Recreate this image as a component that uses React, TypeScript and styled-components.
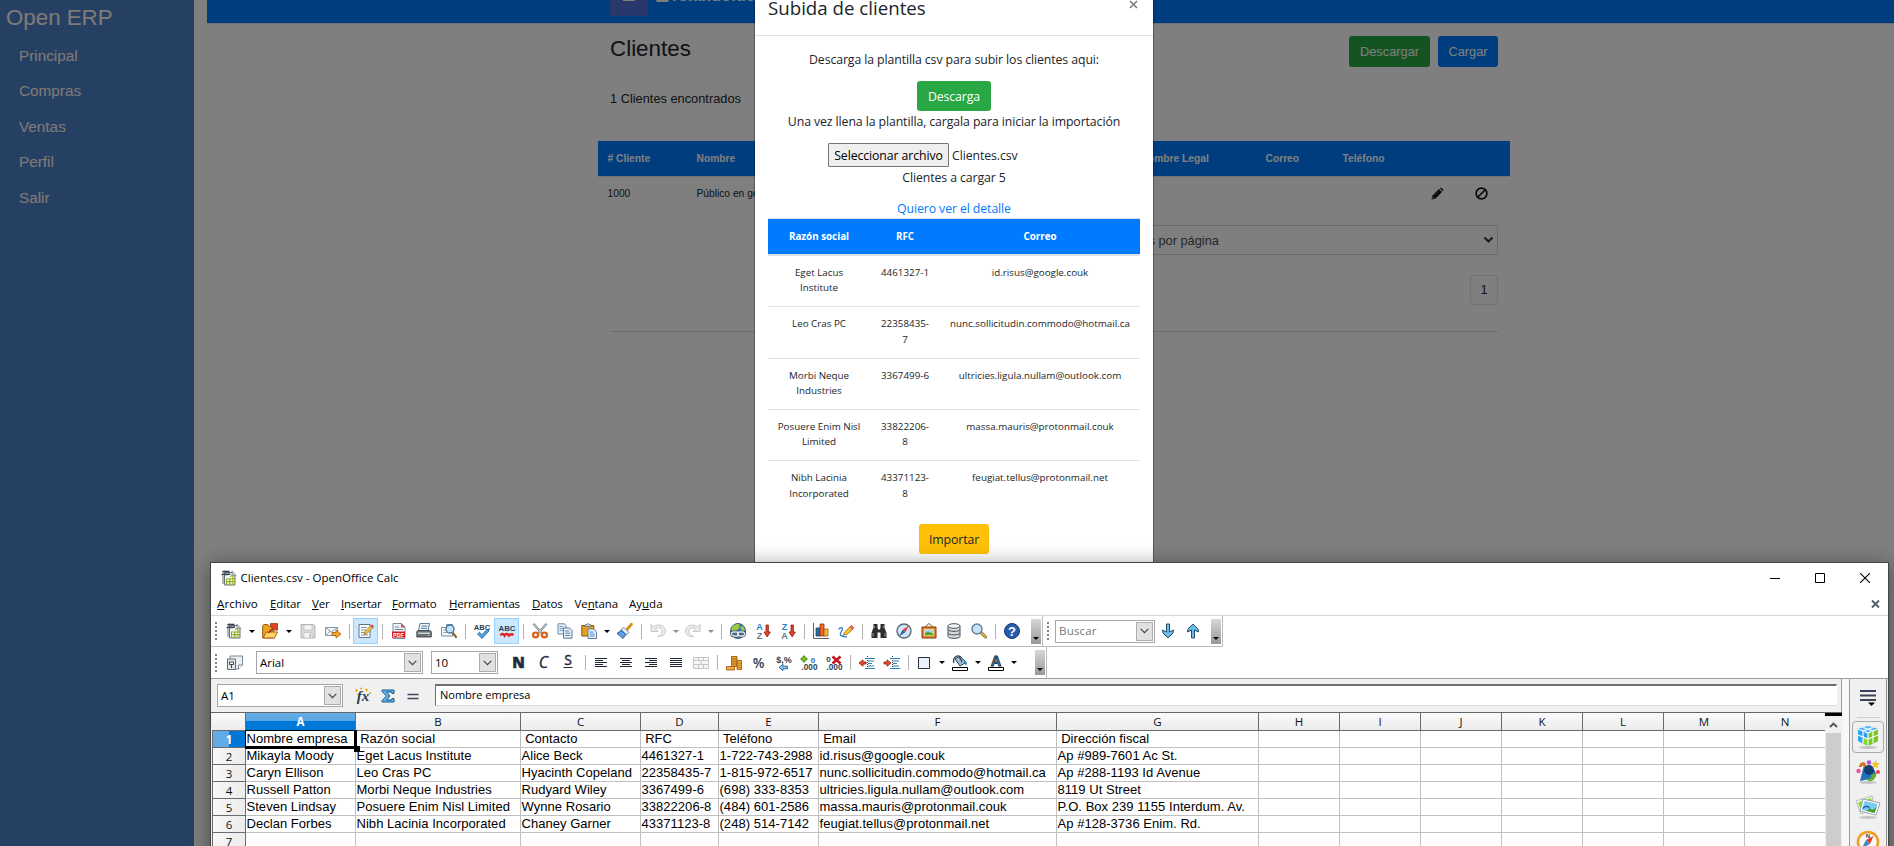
import React from 'react';
import styled, { createGlobalStyle, css } from 'styled-components';

const ui = '"Segoe UI", "Open Sans", sans-serif';
const arial = '"Liberation Sans", Arial, sans-serif';

const GlobalStyle = createGlobalStyle`
  * { box-sizing: border-box; }
  body { margin: 0; background: #808080; overflow: hidden; }
  svg { display: block; flex: none; }
`;

const Screen = styled.div`
  position: relative;
  width: 1894px;
  height: 846px;
  overflow: hidden;
`;

/* ---------- ERP page ---------- */

const Page = styled.div`
  display: flex;
  height: 100%;
  background: #fff;
  font-family: ${arial};
  font-size: 12.8px;
  color: #212529;
`;

const Sidebar = styled.nav`
  width: 194px;
  background: #4c80c8;
  color: #fff5ec;
  padding: 4px 0 0 6px;
`;

const Brand = styled.div`
  font-size: 22.3px;
  line-height: 27px;
`;

const NavItem = styled.a`
  display: block;
  height: 35.4px;
  line-height: 35.4px;
  padding-left: 13px;
  font-size: 15.3px;
`;

const NavList = styled.div`
  padding-top: 7px;
`;

const Main = styled.main`
  flex: 1;
  margin-left: 13px;
`;

const TopBar = styled.header`
  height: 24px;
  background: #007bff;
  border-bottom: 1px solid #dee2e6;
  padding-left: 403px;
  display: flex;
  align-items: flex-start;
`;

const MenuToggle = styled.div`
  width: 38px;
  height: 16px;
  background: #5070d8;
  display: flex;
  justify-content: center;
  margin-right: 8px;
  &::after {
    content: '';
    width: 12px;
    height: 1px;
    background: #fff;
  }
`;

const UserName = styled.div`
  font-weight: 700;
  font-size: 16px;
  line-height: 18px;
  margin: -13px 0 0 3px;
  color: #fff;
`;

const UserIcon = styled.div`
  width: 13px;
  height: 2px;
  background: #fff;
  border-radius: 0 0 5px 5px;
`;

const Container = styled.div`
  width: 912px;
  margin-left: 391px;
`;

const Heading = styled.div`
  display: flex;
  justify-content: space-between;
  padding: 12px 12px 0;
`;

const Title = styled.h1`
  margin: 0;
  font-size: 22.4px;
  font-weight: 400;
  line-height: 26px;
`;

const Actions = styled.div`
  display: flex;
  gap: 8px;
`;

const Button = styled.button<{ $tone: 'green' | 'blue' | 'yellow'; $w: number; $h?: number }>`
  width: ${(p) => p.$w}px;
  height: ${(p) => p.$h ?? 30}px;
  padding: 0;
  border: 0;
  border-radius: 3px;
  font: inherit;
  letter-spacing: inherit;
  color: ${(p) => (p.$tone === 'yellow' ? '#212529' : '#fff')};
  background: ${(p) => ({ green: '#28a745', blue: '#007bff', yellow: '#ffc107' })[p.$tone]};
`;

const Found = styled.div`
  padding: 24px 12px 0;
  line-height: 15px;
`;

const ClientHead = styled.div`
  margin-top: 35px;
  display: grid;
  grid-template-columns: 89px 444px 125px 77px 1fr;
  align-items: center;
  height: 36px;
  padding-left: 9.5px;
  border-bottom: 1px solid #dee2e6;
  background: #007bff;
  color: #fff;
  font-size: 10.24px;
  font-weight: 700;
`;

const ClientRow = styled.div`
  display: grid;
  grid-template-columns: 89px 734px 44px 1fr;
  align-items: center;
  height: 33px;
  padding-left: 9.5px;
  font-size: 10.24px;
`;

const PageSize = styled.div`
  display: flex;
  align-items: center;
  justify-content: space-between;
  width: 500px;
  height: 30px;
  margin: 15px 12px 0 auto;
  padding: 0 3px 0 89px;
  border: 1px solid #ced4da;
  border-radius: 3px;
  color: #495057;
`;

const PageNumber = styled.div`
  width: 28px;
  height: 30px;
  margin: 20px 12px 26px auto;
  border: 1px solid #dee2e6;
  border-radius: 3px;
  line-height: 27px;
  text-align: center;
`;

const Rule = styled.hr`
  margin: 0 12px;
  border: 0;
  border-top: 1px solid #dcdcdc;
`;

const Backdrop = styled.div`
  position: absolute;
  inset: 0;
  background: rgba(0, 0, 0, 0.5);
`;

/* ---------- Upload dialog ---------- */

const Modal = styled.section`
  position: absolute;
  left: 754px;
  top: -30px;
  width: 400px;
  height: 640px;
  border: 1px solid rgba(0, 0, 0, 0.3);
  background: #fff;
  background-clip: padding-box;
  font: 12.3px/19px ${ui};
  letter-spacing: -0.1px;
  color: #212529;
`;

const ModalHeader = styled.div`
  display: flex;
  align-items: flex-end;
  justify-content: space-between;
  height: 65px;
  padding: 0 13px 13px;
  border-bottom: 1px solid #dee2e6;
`;

const ModalTitle = styled.h2`
  margin: 0;
  font-size: 18.7px;
  font-weight: 500;
  line-height: 28px;
  letter-spacing: 0;
`;

const CloseMark = styled.span`
  padding: 0 2px 13px 0;
`;

const ModalBody = styled.div`
  display: flex;
  flex-direction: column;
  align-items: center;
  padding: 14px 13px 0;
`;

const Hint = styled.p`
  margin: 0;
  white-space: nowrap;
`;

const DownloadSlot = styled.div`
  margin: 12px 0 1px;
  font-weight: 500;
`;

const FileInput = styled.div`
  display: flex;
  align-items: center;
  align-self: flex-start;
  gap: 3px;
  height: 24px;
  margin: 12px 0 1px 60px;
`;

const FileButton = styled.span`
  width: 121px;
  height: 24px;
  line-height: 24px;
  text-align: center;
  border: 1px solid #767676;
  border-radius: 1px;
  background: #efefef;
  color: #000;
`;

const DetailLink = styled.a`
  margin-top: 13px;
  line-height: 18px;
  color: #007bff;
`;

const Preview = styled.div`
  width: 372px;
  border-top: 1px solid #dee2e6;
  font-size: 9.8px;
  letter-spacing: 0;
  margin-bottom: 13px;
`;

const PreviewHead = styled.div`
  display: grid;
  grid-template-columns: 102px 70px 200px;
  align-items: center;
  height: 36px;
  border-bottom: 1px solid #dee2e6;
  background: #007bff;
  color: #fff;
  font-weight: 700;
  text-align: center;
`;

const PreviewRow = styled.div`
  display: grid;
  grid-template-columns: 102px 70px 200px;
  height: 51.3px;
  padding-top: 9px;
  border-top: 1px solid #dee2e6;
  line-height: 15.4px;
  text-align: center;
  span { padding: 0 9px; }
  span:last-child { white-space: nowrap; }
`;

/* ---------- Calc window ---------- */

const Window = styled.section`
  position: absolute;
  left: 210px;
  top: 562px;
  width: 1679px;
  height: 300px;
  border: 1px solid #454545;
  background: #fff;
  box-shadow: 0 3px 20px rgba(0, 0, 0, 0.42);
  font: 11.5px/16px ${ui};
  color: #000;
`;

const TitleBar = styled.div`
  display: flex;
  align-items: center;
  height: 30px;
  padding: 0 18px 1px 10px;
`;

const WindowTitle = styled.span`
  flex: 1;
  padding-left: 3.5px;
`;

const WindowButtons = styled.div`
  display: flex;
  gap: 35px;
`;

const MenuBar = styled.div`
  display: flex;
  align-items: center;
  height: 23px;
  padding: 0 8px 0 6px;
  border-bottom: 1px solid #d8d8d8;
`;

const MenuItem = styled.span<{ $w: number; $fit: number }>`
  width: ${(p) => p.$w}px;
  letter-spacing: ${(p) => p.$fit}px;
  white-space: nowrap;
`;

const MenuClose = styled.span`
  margin-left: auto;
`;

const ToolRow = styled.div<{ $last?: boolean }>`
  display: flex;
  height: ${(p) => (p.$last ? 32 : 31)}px;
  ${(p) => p.$last && css`border-bottom: 1px solid #9d9d9d;`}
`;

const Band = styled.div<{ $line?: boolean }>`
  display: flex;
  align-items: center;
  border-right: 1px solid #bcbcbc;
  border-bottom: ${(p) => (p.$line ? '1px solid #bcbcbc' : '0')};
`;

const Grip = styled.i`
  width: 2px;
  height: 18px;
  margin: 0 5px 0 4px;
  background: repeating-linear-gradient(#808080 0 2px, transparent 2px 4px);
`;

const Tool = styled.span<{ $w?: number; $on?: boolean }>`
  display: flex;
  align-items: center;
  justify-content: center;
  width: ${(p) => p.$w ?? 25}px;
  height: 26px;
  ${(p) => p.$on && css`background: #cce8ff; border: 1px solid #99d1ff;`}
`;

const Divider = styled.i<{ $w?: number }>`
  width: 1px;
  height: 15px;
  margin: 0 ${(p) => (p.$w ?? 8) - 4.5}px 0 3.5px;
  background: #b4b4b4;
`;

const Caret = styled.i<{ $w: number; $dim?: boolean }>`
  display: flex;
  justify-content: center;
  width: ${(p) => p.$w}px;
  &::after {
    content: '';
    border: 3px solid transparent;
    border-top-color: ${(p) => (p.$dim ? '#8c8c8c' : '#000')};
    border-bottom: 0;
  }
`;

const Overflow = styled.i<{ $gap: number }>`
  display: flex;
  align-items: flex-end;
  justify-content: center;
  width: 10px;
  height: 25px;
  margin: 0 1px 0 ${(p) => p.$gap}px;
  padding-bottom: 4px;
  background: linear-gradient(#d8d8d8, #989898);
  &::after {
    content: '';
    border: 3px solid transparent;
    border-top-color: #000;
    border-bottom: 0;
  }
`;

const Combo = styled.div<{ $w: number; $m?: string; $dim?: boolean }>`
  display: flex;
  align-items: center;
  justify-content: space-between;
  width: ${(p) => p.$w}px;
  height: 23px;
  margin: ${(p) => p.$m ?? '0'};
  padding: 0 1px 0 3px;
  border: 1px solid #a6a6ac;
  background: #fff;
  color: ${(p) => (p.$dim ? '#7a7a7a' : '#000')};
  letter-spacing: ${(p) => (p.$dim ? 0.2 : 0)}px;
`;

const ComboButton = styled.span`
  display: flex;
  align-items: center;
  justify-content: center;
  width: 17px;
  height: 19px;
  border: 1px solid #adadad;
  background: #e1e1e1;
`;

const Body = styled.div`
  display: flex;
  height: 170px;
  background: #f0f0f0;
`;

const Sheet = styled.div`
  width: 1631px;
`;

const FormulaBar = styled.div`
  display: flex;
  align-items: flex-start;
  height: 33px;
  padding: 5px 4px 0 6px;
  border-right: 1px solid #9a9a9a;
`;

const FormulaTools = styled.div`
  display: flex;
  align-items: center;
  height: 24px;
  padding-left: 7.5px;
`;

const FormulaInput = styled.div`
  flex: 1;
  height: 22px;
  margin-left: 9.5px;
  padding-left: 4px;
  border: 1px solid #fff;
  border-top: 2px solid #6e6e6e;
  border-left: 1px solid #6e6e6e;
  border-bottom-color: #dadada;
  background: #fff;
  line-height: 18px;
  font-size: 11px;
`;

const GridArea = styled.div`
  display: flex;
  padding-left: 1px;
  border-top: 1px solid #666;
`;

const columns = '34px 110px 165px 120px 78px 100px 238px 202px repeat(6, 81px) 80px';

const Cells = styled.div`
  position: relative;
  width: 1613px;
`;

const Line = styled.div<{ $head?: boolean }>`
  display: grid;
  grid-template-columns: ${columns};
  height: ${(p) => (p.$head ? 18 : 17)}px;
`;

const HeadCell = styled.span<{ $active?: boolean }>`
  height: 18px;
  border-right: 1px solid #6b6b6b;
  border-bottom: 1px solid #6b6b6b;
  background: ${(p) => (p.$active ? 'linear-gradient(#66ade8, #58a5e3 50%, #0078d7 50%)' : 'linear-gradient(#fafafa, #ececec)')};
  color: ${(p) => (p.$active ? '#fff' : '#111')};
  font-weight: ${(p) => (p.$active ? 700 : 400)};
  text-align: center;
  line-height: 17px;
  &:last-child { border-right: 0; }
`;

const RowCell = styled.span<{ $active?: boolean }>`
  height: 17px;
  border: 1px solid #6b6b6b;
  border-top: 0;
  background: ${(p) => (p.$active ? 'linear-gradient(90deg, #62abe7 50%, #0078d7 50%)' : 'linear-gradient(90deg, #f7f7f7, #ececec)')};
  color: ${(p) => (p.$active ? '#fff' : '#111')};
  font-weight: ${(p) => (p.$active ? 700 : 400)};
  text-align: center;
  line-height: 17px;
`;

const DataCell = styled.span`
  height: 17px;
  padding-left: 0.5px;
  border-right: 1px solid #c0c0c0;
  border-bottom: 1px solid #c0c0c0;
  background: #fff;
  font: 13px/16px ${arial};
  letter-spacing: 0.04px;
  white-space: pre;
  &:last-child { border-right: 0; }
`;

const Cursor = styled.div`
  position: absolute;
  left: 33px;
  top: 17px;
  width: 112px;
  height: 19px;
  border: 1px solid #000;
  border-right-width: 3px;
  border-bottom-width: 3px;
  &::after {
    content: '';
    position: absolute;
    right: -6px;
    bottom: -6px;
    width: 6px;
    height: 6px;
    background: #000;
  }
`;

const ScrollBar = styled.div`
  width: 17px;
  height: 140px;
  border-top: 3px solid #000;
  background: linear-gradient(90deg, #f0f0f0 1px, #cdcdcd 1px 16px, #f0f0f0 16px);
`;

const ScrollUp = styled.div`
  display: flex;
  align-items: center;
  justify-content: center;
  height: 17px;
  background: #f0f0f0;
`;

const Splitter = styled.div`
  width: 8px;
  background: #f8f8f8;
  border-right: 1px solid #9a9a9a;
`;

const Deck = styled.div`
  display: flex;
  flex-direction: column;
  align-items: center;
  width: 37px;
  border-right: 1px solid #8c8c8c;
  padding-top: 11px;
`;

const DeckRule = styled.i`
  flex: none;
  width: 23px;
  height: 1px;
  margin: 11px 0 3px;
  background: #d0d0d0;
`;

const DeckButton = styled.span<{ $on?: boolean }>`
  display: flex;
  align-items: center;
  justify-content: center;
  flex: none;
  width: 32px;
  height: 32px;
  margin-bottom: 3px;
  border: 1px solid ${(p) => (p.$on ? '#a8a8a8' : 'transparent')};
  border-radius: 4px;
`;

/* ---------- Icons ---------- */

const Glyph = styled.svg`
  width: 16px;
  height: 16px;
  overflow: visible;
`;

const BigGlyph = styled(Glyph)`
  width: 24px;
  height: 24px;
`;

const ink = '#2c3e50';

const icons: Record<string, React.ReactNode> = {
  calc: (
    <>
      <path d="M3.500 2.500h7.500l3 3v9.500h-10.500z" fill="#f1f4f5" stroke="#66727b" />
      <path d="M11 1v4.500h4z" fill="#c5ced4" stroke="#66727b" strokeWidth=".6" />
      <path d="M1.500 2C4 .5 5 2.500 8.500 1.200M.8 5C3.500 3 5.500 5.500 9 3.800" fill="none" stroke="#35424c" strokeWidth="1.700" />
      <path d="M2 6v8" stroke="#7b8790" strokeWidth="1.200" />
      <path d="M5 8.500h4v-3h3.500v3H14v6H5z" fill="#8dab1a" />
      <path d="M6 9.500h2.200v1.600H6zM9.400 6.500h2v2h-2zM9.400 9.500h2v1.600h-2zM6 12.300h2.200v1.400H6zM9.400 12.300h2v1.400h-2zM12.300 9.500h1v1.600h-1zM12.300 12.300h1v1.400h-1z" fill="#fff" />
    </>
  ),
  open: (
    <>
      <path d="M.7 15V2.500l1-1h4l1.500 2H12V15z" fill="#e9a126" stroke="#9c5a12" />
      <path d="M1 15l3.500-6H15.500l-3 6z" fill="#ffd062" stroke="#a8641a" />
      <path d="M6 10l4.500-5L8.500 3V.6h6.900v6.600h-1.300L12.500 6z" fill="#e0451f" stroke="#8f2410" strokeWidth=".8" />
    </>
  ),
  save: (
    <>
      <path d="M1 1.500h12.500l1.500 1.500v12H1z" fill="#dadada" stroke="#b5b5b5" />
      <path d="M4 2h8v5H4z" fill="#f8f8f8" stroke="#bcbcbc" strokeWidth=".7" />
      <path d="M4 9.500h8V15H4z" fill="#f4f4f4" stroke="#bcbcbc" strokeWidth=".7" />
      <path d="M9 11h2v3.500H9z" fill="#c4c4c4" />
    </>
  ),
  mail: (
    <>
      <path d="M.5 4.500h12v8H.5z" fill="#f7fafc" stroke="#8295a5" />
      <path d="M.5 4.500l6 4.500 6-4.500M.5 12.500L5 8.500" fill="none" stroke="#8295a5" />
      <path d="M7 9.500h4V7l5 4-5 4v-2.500H7z" fill="#f5a62b" stroke="#9c5d14" strokeWidth=".8" />
    </>
  ),
  edit: (
    <>
      <path d="M1 1.500h11v13H1z" fill="#fbfdff" stroke="#5f7286" />
      <path d="M3 4.500h6M3 7h5M3 9.500h4M3 12h7" stroke="#7d8fa0" />
      <path d="M6 11.500l1-3 6.500-6.500 2 2L9 10.500z" fill="#f6c430" stroke="#8d6a1c" strokeWidth=".7" />
      <path d="M12.300 3l1.700-1.700 2 2L14.300 5z" fill="#e5405b" />
    </>
  ),
  pdf: (
    <>
      <path d="M2 .5h8.500L14 4v11.500H2z" fill="#eef3f7" stroke="#7a8b9a" />
      <path d="M10 .5L14 4.500h-4z" fill="#e34b4b" />
      <path d="M4 4h4M4 6.500h8" stroke="#6f8191" />
      <path d="M1 8.500h13v6H1z" fill="#d8181e" />
      <text x="7.600" y="13.800" fontSize="5.500" fontWeight="700" fill="#fff" textAnchor="middle" fontFamily="Liberation Sans">PDF</text>
    </>
  ),
  print: (
    <>
      <path d="M4 .5h9.500L12 8H2.500z" fill="#f5f9fc" stroke="#5b7d9a" />
      <path d="M5.500 3h6M5 5.300h6" stroke="#3c78a8" />
      <path d="M.8 8.500l1.500-1h11.500l1.500 1V14H.8z" fill="#6b7379" stroke="#333a40" strokeWidth=".8" />
      <path d="M2 9.500h12v1.500H2z" fill="#cfd6da" />
      <path d="M11.500 12h2v1h-2z" fill="#8ce04c" />
    </>
  ),
  preview: (
    <>
      <path d="M.5 4.500h5v-3h6V13h-11z" fill="#f4f7fa" stroke="#7d8c99" />
      <path d="M2.500 7h3M2.500 9.500h5" stroke="#8ea0b0" />
      <path d="M11.500 9.500l3.500 4.500" stroke="#8c6239" strokeWidth="2.200" strokeLinecap="round" />
      <circle cx="9" cy="6" r="4" fill="#bfe2fb" stroke="#4a6f94" strokeWidth="1.300" />
    </>
  ),
  spell: (
    <>
      <text x="8" y="6.500" fontSize="7.600" fontWeight="700" fill={ink} textAnchor="middle" fontFamily="Liberation Sans">ABC</text>
      <path d="M3.500 11l2-1.700 2.500 2.500 5-5.500 2 1.700L8 15.500z" fill="#4ea6e4" stroke="#1c5d94" strokeWidth=".8" />
    </>
  ),
  autospell: (
    <>
      <text x="8" y="8" fontSize="7.800" fontWeight="700" fill={ink} textAnchor="middle" fontFamily="Liberation Sans">ABC</text>
      <path d="M1.500 12.500c1.500-2.500 3-2 4 0 1-2 3-2 4.500 0 1.500-2 3-1.500 4.500-.5" fill="none" stroke="#e3201b" strokeWidth="2.300" />
    </>
  ),
  cut: (
    <>
      <path d="M1.500.8L10.500 11M14.500.8L5.500 11" stroke="#7d8a94" strokeWidth="2.200" />
      <path d="M2 1.200L10 10.500M14 1.200L6 10.500" stroke="#d8e1e8" strokeWidth=".8" />
      <ellipse cx="3.600" cy="12" rx="2.600" ry="2.300" fill="none" stroke="#d9661d" strokeWidth="2.300" />
      <ellipse cx="12.400" cy="12" rx="2.600" ry="2.300" fill="none" stroke="#d9661d" strokeWidth="2.300" />
    </>
  ),
  copy: (
    <>
      <path d="M1 .8h6.500L9 2.500V11H1z" fill="#e8f0f8" stroke="#6c89a6" />
      <path d="M2.500 3.500h4M2.500 5.500h4M2.500 7.500h4" stroke="#5a87b5" strokeWidth=".8" />
      <path d="M6.500 5h6l2.500 2.500v7.700H6.500z" fill="#e8f0f8" stroke="#5d7a98" />
      <path d="M8.200 8h4M8.200 10.200h5M8.200 12.500h5" stroke="#3c78b4" strokeWidth=".9" />
    </>
  ),
  paste: (
    <>
      <path d="M.8 2.500h12V13H.8z" fill="#e2a021" stroke="#8a5a12" />
      <path d="M3.500 3.500l1-2h1.500L7 .3 8 1.500h1.500l1 2z" fill="#c7cdd2" stroke="#5d6469" strokeWidth=".7" />
      <path d="M7 6h5.500l3 2.700v6.800H7z" fill="#e8f2fb" stroke="#5d7a98" />
      <path d="M8.700 9h3.500M8.700 11h5M8.700 13h5" stroke="#3c78b4" strokeWidth=".9" />
    </>
  ),
  brush: (
    <>
      <path d="M10 6.500L14.500 1.200" stroke="#d7901c" strokeWidth="2.800" strokeLinecap="round" />
      <path d="M6.500 4l5.500 5.500L9 12 4 7z" fill="#e6ecf2" stroke="#5a6f86" strokeWidth=".7" />
      <path d="M4.500 7L9 11.500 6 15.500 0 10.500z" fill="#3d8ad8" stroke="#1d4f8c" strokeWidth=".8" />
      <path d="M2 10.500l4 3.500M3.500 9l4 3.500" stroke="#9fcdf5" />
    </>
  ),
  undo: <path d="M1 1.500v7h7L5.500 6C8 3.500 12.500 5 12 9c-.3 2.500-2.500 4-4.500 4.500 4.500.5 8-1.500 8-5.500C15.500 2.500 8 0 3.500 4z" fill="#ececec" stroke="#c3c3c3" strokeWidth=".9" />,
  redo: <path d="M15 1.500v7H8L10.500 6C8 3.500 3.500 5 4 9c.3 2.500 2.500 4 4.500 4.500C4 14 .5 12 .5 8 .5 2.500 8 0 12.500 4z" fill="#ececec" stroke="#c3c3c3" strokeWidth=".9" />,
  globe: (
    <>
      <circle cx="8" cy="8" r="7.500" fill="#3a7dc0" stroke="#1e3f63" strokeWidth=".8" />
      <path d="M1.500 5c2-4 6-4.500 8-3.500L9 5 6 7.500H1.500zM10 4l3-1 2 4-3 1z" fill="#a3c940" />
      <rect x="1.500" y="9" width="7" height="4" rx="2" fill="none" stroke="#3a3f44" strokeWidth="2.600" />
      <rect x="7.500" y="9" width="7" height="4" rx="2" fill="none" stroke="#3a3f44" strokeWidth="2.600" />
      <rect x="1.500" y="9" width="7" height="4" rx="2" fill="none" stroke="#e8ecef" strokeWidth="1.300" />
      <rect x="7.500" y="9" width="7" height="4" rx="2" fill="none" stroke="#e8ecef" strokeWidth="1.300" />
    </>
  ),
  sortAsc: (
    <>
      <text x="4.500" y="7" fontSize="9" fontWeight="700" fill="#1f84cf" textAnchor="middle" fontFamily="Liberation Sans">A</text>
      <text x="4.500" y="16" fontSize="9" fontWeight="700" fill="#68727b" textAnchor="middle" fontFamily="Liberation Sans">Z</text>
      <path d="M11 2h2.400v7h2L12.200 14 9 9h2z" fill="#e0462a" stroke="#8d1f10" strokeWidth=".8" />
    </>
  ),
  sortDesc: (
    <>
      <text x="4.500" y="7" fontSize="9" fontWeight="700" fill="#1f84cf" textAnchor="middle" fontFamily="Liberation Sans">Z</text>
      <text x="4.500" y="16" fontSize="9" fontWeight="700" fill="#68727b" textAnchor="middle" fontFamily="Liberation Sans">A</text>
      <path d="M11 2h2.400v7h2L12.200 14 9 9h2z" fill="#e0462a" stroke="#8d1f10" strokeWidth=".8" />
    </>
  ),
  chart: (
    <>
      <path d="M.5 0v15.500H16" fill="none" stroke="#556270" />
      <path d="M3 5h4v8H3z" fill="#2e6e9e" stroke="#16405f" strokeWidth=".8" />
      <path d="M7 1h4v12H7z" fill="#f0642a" stroke="#8f2f0d" strokeWidth=".8" />
      <path d="M11 6h4v7h-4z" fill="#f4b73a" stroke="#94651a" strokeWidth=".8" />
    </>
  ),
  draw: (
    <>
      <path d="M.5 6.500c2-3 5-2 3.500.8S1 12.500 4 13s2.500 1 5 1" fill="none" stroke="#2f7fd0" strokeWidth="1.300" />
      <path d="M5.500 12l1-3 6-5.500 2.500 2.500L9 11.500z" fill="#f6c430" stroke="#8d6a1c" strokeWidth=".8" />
      <path d="M11.800 4l1.800-1.700 2.400 2.400L14.300 6.500z" fill="#e86b6b" stroke="#a33" strokeWidth=".5" />
    </>
  ),
  find: (
    <>
      <path d="M2.500 1h4v3.500l.5 2h2l.5-2V1h4v3.500l2 5.500v5H9.500V9.500h-3V15H.5v-5l2-5.500z" fill="#2b2d2f" />
      <path d="M3.500 3v2M12.500 3v2M2 10v3.500M14 10v3.500" stroke="#83898e" strokeWidth="1.200" />
    </>
  ),
  compass: (
    <>
      <circle cx="8" cy="8" r="7" fill="#cfe6f8" stroke="#5b6a78" strokeWidth="1.400" />
      <path d="M13 2.500L9.300 9.300 6.700 6.800z" fill="#e23c2c" />
      <path d="M3 13.500l3.700-6.700 2.600 2.500z" fill="#2e62a8" />
    </>
  ),
  gallery: (
    <>
      <path d="M4 4l4-3.500L12 4" fill="none" stroke="#8a5a2a" />
      <path d="M1 4h14v11H1z" fill="#e0862a" stroke="#7c3f0c" />
      <path d="M3.500 6.500h9v6h-9z" fill="#9fd6f5" stroke="#fbe3b0" strokeWidth=".8" />
      <path d="M4 12.300V10l3-1.500 5.300 2v1.800z" fill="#58a030" />
    </>
  ),
  data: (
    <>
      <path d="M2 3v10.500c0 2.500 12 2.500 12 0V3z" fill="#d3d8dc" stroke="#4c555d" />
      <ellipse cx="8" cy="3" rx="6" ry="2.300" fill="#f1f4f6" stroke="#4c555d" />
      <path d="M2 6.500c0 2.500 12 2.500 12 0M2 10c0 2.500 12 2.500 12 0" fill="none" stroke="#4c555d" />
    </>
  ),
  zoom: (
    <>
      <path d="M10 9.500l4.500 4.500" stroke="#8a5c22" strokeWidth="3" strokeLinecap="round" />
      <path d="M10 9.500l4.500 4.500" stroke="#f0c04a" strokeWidth="1.400" strokeLinecap="round" />
      <circle cx="6" cy="6" r="5" fill="#c4e3fa" stroke="#5d7f9f" strokeWidth="1.400" />
    </>
  ),
  help: (
    <>
      <circle cx="8" cy="8" r="7.500" fill="#2a5cae" stroke="#173a78" />
      <text x="8" y="12.700" fontSize="13" fontWeight="700" fill="#fff" textAnchor="middle" fontFamily="Liberation Sans">?</text>
    </>
  ),
  down: <path d="M6.500 1h3v8l4-2-.5 3L8 15 3 10 2.500 7l4 2z" fill="#6fbbe8" stroke="#24506f" />,
  up: <path d="M6.500 15h3V7l4 2-.5-3L8 1 3 6l-.5 3 4-2z" fill="#6fbbe8" stroke="#24506f" />,
  styles: (
    <>
      <path d="M3 1h12.500v9l-4 4H3z" fill="#edf1f4" stroke="#7c8994" />
      <path d="M.5 4h8v10.500h-8z" fill="#dfe6eb" stroke="#5d6a75" />
      <path d="M2.500 7h4v2.500h-4zM4.500 9.500V13" fill="#fff" stroke="#39454f" />
      <path d="M15.500 10h-4v4" fill="#fff" stroke="#7c8994" />
    </>
  ),
  bold: <text x="7.500" y="12.500" fontSize="15" fontWeight="800" fill="#1f2b3c" stroke="#1f2b3c" strokeWidth=".5" textAnchor="middle" fontFamily="Open Sans">N</text>,
  italic: <text x="7.500" y="12.500" fontSize="16" fontStyle="italic" fill="#1f2b3c" stroke="#1f2b3c" strokeWidth=".3" textAnchor="middle" fontFamily="Open Sans">C</text>,
  underline: (
    <>
      <text x="7" y="10" fontSize="14" fill="#1f2b3c" stroke="#1f2b3c" strokeWidth=".4" textAnchor="middle" fontFamily="Open Sans">S</text>
      <path d="M2.500 12.500h9" stroke="#1f2b3c" />
    </>
  ),
  left: <path d="M2 3.500h12M2 5.500h8M2 7.500h12M2 9.500h8M2 11.500h12" stroke="#1c2733" />,
  center: <path d="M2 3.500h12M4 5.500h8M2 7.500h12M4 9.500h8M2 11.500h12" stroke="#1c2733" />,
  right: <path d="M2 3.500h12M6 5.500h8M2 7.500h12M6 9.500h8M2 11.500h12" stroke="#1c2733" />,
  justify: <path d="M2 3.500h12M2 5.500h12M2 7.500h12M2 9.500h12M2 11.500h12" stroke="#1c2733" />,
  merge: <path d="M.5 2.500h15v11H.5zM.5 5.500h15M.5 9.500h15M5.500 2.500v3M10.500 2.500v3M5.500 9.500v4M10.500 9.500v4M8 5.500v4" fill="#f6f6f6" stroke="#c6c6c6" />,
  currency: (
    <>
      <path d="M5.500 1.500h5.500v10H5.500z" fill="#e79a2a" stroke="#94510d" strokeWidth=".8" />
      <path d="M11 5.500h4.500v9H11zM.5 11.500h8v3.500H.5z" fill="#f0ae3c" stroke="#94510d" strokeWidth=".8" />
      <path d="M5.500 4h5.500M5.500 6.500h5.500M5.500 9h5.500M11 8h4.500M11 10.300h4.500M11 12.500h4.500" stroke="#a8610f" strokeWidth=".7" />
    </>
  ),
  percent: <text x="7.500" y="12.500" fontSize="13.500" fontWeight="600" fill={ink} textAnchor="middle" fontFamily="Open Sans">%</text>,
  standard: (
    <>
      <text x="8" y="7.500" fontSize="9" fontWeight="700" fill={ink} textAnchor="middle" fontFamily="Liberation Sans">$,%</text>
      <path d="M3 12.500l4-3v1.700h4.500v2.600H7v1.700z" fill="#8cc9ef" stroke="#1c5d94" strokeWidth=".9" />
    </>
  ),
  addDec: (
    <>
      <path d="M2 1h2v2h2v2H4v2H2V5H0V3h2z" fill="#7bc62d" stroke="#3f7d10" strokeWidth=".7" />
      <text x="12" y="7.500" fontSize="8" fontWeight="700" fill="#2b62b8" textAnchor="middle" fontFamily="Liberation Sans">0</text>
      <text x="8.500" y="15.300" fontSize="8.200" fontWeight="700" fill={ink} textAnchor="middle" fontFamily="Liberation Sans">.000</text>
    </>
  ),
  delDec: (
    <>
      <text x="2.500" y="7" fontSize="8" fontWeight="700" fill={ink} textAnchor="middle" fontFamily="Liberation Sans">0</text>
      <text x="8.500" y="15.300" fontSize="8.200" fontWeight="700" fill={ink} textAnchor="middle" fontFamily="Liberation Sans">.000</text>
      <path d="M6.500 1.500l8 7M14.500 1.500l-8 7" stroke="#c9151b" strokeWidth="2.600" />
    </>
  ),
  outdent: (
    <>
      <path d="M8.500 1v14" stroke={ink} strokeDasharray="1 1" />
      <path d="M6 3.500h10M9 6h6M9 8.500h4M9 11h6M6 13.500h10" stroke="#2f7fb8" strokeWidth="1.200" />
      <path d="M0 8l4-3.200V7h3v2H4v2.200z" fill="#e8502f" stroke="#8d1f10" strokeWidth=".8" />
    </>
  ),
  indent: (
    <>
      <path d="M8.500 1v14" stroke={ink} strokeDasharray="1 1" />
      <path d="M6 3.500h10M9 6h6M9 8.500h4M9 11h6M6 13.500h10" stroke="#2f7fb8" strokeWidth="1.200" />
      <path d="M7 8L3 4.800V7H0v2h3v2.200z" fill="#e8502f" stroke="#8d1f10" strokeWidth=".8" />
    </>
  ),
  border: <path d="M2.500 2.500h11v11h-11z" fill="#edf1f9" stroke="#27313f" />,
  fill: (
    <>
      <path d="M3 4l5-3 6 6.500-6 3.500z" fill="#9fb9cc" stroke="#2e4354" />
      <path d="M2 8c-2-4 2-8 5-7l3 6" fill="none" stroke="#2e4354" strokeWidth="1.200" />
      <path d="M12 4l3 4-1 3-2-4z" fill="#2f8fc8" />
      <path d="M.5 12.500h15v3H.5z" fill="#fff" stroke="#000" />
    </>
  ),
  fontColor: (
    <>
      <text x="8" y="11" fontSize="14.500" fontWeight="700" fill="#4a7ba0" stroke="#1d3448" strokeWidth=".8" textAnchor="middle" fontFamily="Liberation Sans">A</text>
      <path d="M.5 12.500h15v3H.5z" fill="#fff" stroke="#000" />
    </>
  ),
  fx: (
    <>
      <text x="8" y="13" fontSize="15" fontWeight="700" fontStyle="italic" fill={ink} textAnchor="middle" fontFamily="Liberation Serif">fx</text>
      <path d="M0 2.500h3M1.500 1v3M5 .5h2M6-.500v2M10 2h3M11.500.5v3M14 5h2M15 4v2" stroke="#f0ac1c" strokeWidth="1.200" />
    </>
  ),
  sum: <path d="M2 2h12v3.500h-2L11.500 4H6.500l3.500 4-3.500 4h5l.5-1.500h2V14H2v-1.500L6.500 8 2 3.500z" fill="#5fb4e8" stroke="#1b5a8c" />,
  equal: <path d="M2.500 6.500h11M2.500 10.500h11" stroke="#3a4a5c" strokeWidth="1.600" />,
};

const Icon = ({ name }: { name: string }) => <Glyph viewBox="0 0 16 16">{icons[name]}</Glyph>;

const Chevron = () => (
  <svg width="9" height="6" viewBox="0 0 9 6"><path d="M.7.8l3.800 3.800L8.300.8" fill="none" stroke="#444" strokeWidth="1.200" /></svg>
);

const Shadow = () => <ellipse cx="12" cy="22.500" rx="9" ry="1.500" fill="#c4c4c4" />;

const CubesIcon = () => (
  <BigGlyph viewBox="0 0 24 24">
    <Shadow />
    <path d="M2 4l10-3 10 3v12l-10 5-10-5z" fill="#2fa0f5" />
    <path d="M12 8l10-4v12l-10 5z" fill="#78c81e" />
    <path d="M12 1l10 3-10 4-10-4z" fill="#55b8f8" />
    <path d="M7 12l5 2v7l-5-2.500z" fill="#8ada28" />
    <path d="M2 4l10 4 10-4M12 8v13M2 10l10 4 10-4M7 2.500L17 6v12.500M17 2.500L7 6v12.500" fill="none" stroke="#f4fbff" strokeWidth="1.200" />
  </BigGlyph>
);

const StylesIcon = () => (
  <BigGlyph viewBox="0 0 24 24">
    <Shadow />
    <path d="M8 5l-4 16 15-3c3-5-1-11-8-12z" fill="#2372b8" />
    <ellipse cx="13" cy="10" rx="5" ry="5" fill="#123f70" />
    <path d="M3 7c0-6 7-6 7-2L8 8C8 5 6 5 6 7z" fill="#d8701c" />
    <path d="M12 21c6 1 8-3 7-8l-4 2c1 3-1 4-4 4z" fill="#62b02c" />
    <circle cx="13" cy="2.500" r="2.200" fill="#b44fd8" />
    <path d="M19.500 0l1.300 3 3.200.2-2.500 2.200.9 3.200-2.900-1.700-2.900 1.700.9-3.200L15.200 3.200l3.100-.2z" fill="#f5c22c" />
    <circle cx="2.500" cy="11" r="2.200" fill="#e8559a" />
    <circle cx="22" cy="12" r="2" fill="#e8434b" />
  </BigGlyph>
);

const GalleryIcon = () => (
  <BigGlyph viewBox="0 0 24 24">
    <Shadow />
    <path d="M0 6l16-5 3 12L5 19z" fill="#f4faf0" stroke="#a4aab0" strokeWidth=".8" />
    <path d="M2 7.500l13-4.500 1 3L4 13z" fill="#8ade28" />
    <path d="M7 4l17 4-4 12-16-4z" fill="#fff" stroke="#8b9298" strokeWidth=".8" />
    <path d="M8.500 6l13 3-3 9-12.500-3z" fill="#7cc9f2" />
    <path d="M10 15.800l4-2 3 1 3.800-2.800-2.300 6z" fill="#4a9a2c" />
    <path d="M6.800 13.500c2-3 5-3 7 0" fill="none" stroke="#1a60a8" strokeWidth="1.300" />
  </BigGlyph>
);

const NavigatorIcon = () => (
  <BigGlyph viewBox="0 0 24 24">
    <circle cx="12" cy="12" r="10" fill="#f8f8f6" stroke="#f0a01c" strokeWidth="2.600" />
    <path d="M17.500 6L14 14l-4-4z" fill="#e23c2c" />
    <path d="M6 18l4-8 4 4z" fill="#3a86c8" />
    <text x="12" y="8" fontSize="6" fontWeight="700" fill="#444" textAnchor="middle" fontFamily="Liberation Sans">N</text>
  </BigGlyph>
);

/* ---------- Data ---------- */

const clients = [
  ['Eget Lacus Institute', '4461327-1', 'id.risus@google.couk'],
  ['Leo Cras PC', '22358435-7', 'nunc.sollicitudin.commodo@hotmail.ca'],
  ['Morbi Neque Industries', '3367499-6', 'ultricies.ligula.nullam@outlook.com'],
  ['Posuere Enim Nisl Limited', '33822206-8', 'massa.mauris@protonmail.couk'],
  ['Nibh Lacinia Incorporated', '43371123-8', 'feugiat.tellus@protonmail.net'],
];

const letters = 'ABCDEFGHIJKLMN'.split('');

const sheetRows = [
  ['Nombre empresa', ' Razón social', ' Contacto', ' RFC', ' Teléfono', ' Email', ' Dirección fiscal'],
  ['Mikayla Moody', 'Eget Lacus Institute', 'Alice Beck', '4461327-1', '1-722-743-2988', 'id.risus@google.couk', 'Ap #989-7601 Ac St.'],
  ['Caryn Ellison', 'Leo Cras PC', 'Hyacinth Copeland', '22358435-7', '1-815-972-6517', 'nunc.sollicitudin.commodo@hotmail.ca', 'Ap #288-1193 Id Avenue'],
  ['Russell Patton', 'Morbi Neque Industries', 'Rudyard Wiley', '3367499-6', '(698) 333-8353', 'ultricies.ligula.nullam@outlook.com', '8119 Ut Street'],
  ['Steven Lindsay', 'Posuere Enim Nisl Limited', 'Wynne Rosario', '33822206-8', '(484) 601-2586', 'massa.mauris@protonmail.couk', 'P.O. Box 239 1155 Interdum. Av.'],
  ['Declan Forbes', 'Nibh Lacinia Incorporated', 'Chaney Garner', '43371123-8', '(248) 514-7142', 'feugiat.tellus@protonmail.net', 'Ap #128-3736 Enim. Rd.'],
  [],
];

// prefix, access key, rest, item width, letter spacing
const menus: [string, string, string, number, number][] = [
  ['', 'A', 'rchivo', 53, 0.1],
  ['', 'E', 'ditar', 42, -0.1],
  ['', 'V', 'er', 29, -0.1],
  ['', 'I', 'nsertar', 51, -0.2],
  ['', 'F', 'ormato', 57, -0.15],
  ['', 'H', 'erramientas', 83, -0.25],
  ['', 'D', 'atos', 42.5, -0.1],
  ['Ve', 'n', 'tana', 54.5, -0.1],
  ['Ay', 'u', 'da', 40, 0],
];

const ErpPage = () => (
  <Page>
    <Sidebar>
      <Brand>Open ERP</Brand>
      <NavList>
        {['Principal', 'Compras', 'Ventas', 'Perfil', 'Salir'].map((n) => <NavItem key={n}>{n}</NavItem>)}
      </NavList>
    </Sidebar>
    <Main>
      <TopBar>
        <MenuToggle />
        <UserIcon />
        <UserName>rolandofuentes</UserName>
      </TopBar>
      <Container>
        <Heading>
          <Title>Clientes</Title>
          <Actions>
            <Button $tone="green" $w={81} $h={31}>Descargar</Button>
            <Button $tone="blue" $w={60} $h={31}>Cargar</Button>
          </Actions>
        </Heading>
        <Found>1 Clientes encontrados</Found>
        <ClientHead>
          <span># Cliente</span><span>Nombre</span><span>Nombre Legal</span><span>Correo</span><span>Teléfono</span>
        </ClientHead>
        <ClientRow>
          <span>1000</span>
          <span>Público en general</span>
          <svg width="13" height="13" viewBox="0 0 13 13">
            <path d="M.5 12.500l.8-3.800L8 2l3 3-6.700 6.700zM8.800 1.200L10 .4l2.600 2.500-.8 1.300z" fill="#111" />
            <path d="M1.500 11.500l.5-1.800 1.300 1.300zM3.500 8.500l5-5" stroke="#777" strokeWidth=".7" fill="#999" />
          </svg>
          <svg width="13" height="13" viewBox="0 0 14 14">
            <circle cx="7" cy="7" r="5.800" fill="none" stroke="#111" strokeWidth="1.800" />
            <path d="M3.200 10.800l7.600-7.600" stroke="#111" strokeWidth="1.800" />
          </svg>
        </ClientRow>
        <PageSize>
          10 registros por página
          <svg width="11" height="8" viewBox="0 0 11 8"><path d="M1.500 1.500l4 4 4-4" fill="none" stroke="#343a40" strokeWidth="2.200" /></svg>
        </PageSize>
        <PageNumber>1</PageNumber>
        <Rule />
      </Container>
    </Main>
  </Page>
);

const UploadDialog = () => (
  <Modal>
    <ModalHeader>
      <ModalTitle>Subida de clientes</ModalTitle>
      <CloseMark>
        <svg width="9" height="9" viewBox="0 0 9 9"><path d="M1 1l7 7M8 1L1 8" stroke="#7f7f7f" strokeWidth="1.600" /></svg>
      </CloseMark>
    </ModalHeader>
    <ModalBody>
      <Hint>Descarga la plantilla csv para subir los clientes aqui:</Hint>
      <DownloadSlot><Button $tone="green" $w={74}>Descarga</Button></DownloadSlot>
      <Hint>Una vez llena la plantilla, cargala para iniciar la importación</Hint>
      <FileInput><FileButton>Seleccionar archivo</FileButton>Clientes.csv</FileInput>
      <Hint>Clientes a cargar 5</Hint>
      <DetailLink>Quiero ver el detalle</DetailLink>
      <Preview>
        <PreviewHead><span>Razón social</span><span>RFC</span><span>Correo</span></PreviewHead>
        {clients.map((c) => (
          <PreviewRow key={c[1]}>{c.map((v) => <span key={v}>{v}</span>)}</PreviewRow>
        ))}
      </Preview>
      <Button $tone="yellow" $w={70}>Importar</Button>
    </ModalBody>
  </Modal>
);

const tools = (...names: string[]) => names.map((n) => <Tool key={n}><Icon name={n} /></Tool>);

const CalcWindow = () => (
  <Window>
    <TitleBar>
      <Icon name="calc" />
      <WindowTitle>Clientes.csv - OpenOffice Calc</WindowTitle>
      <WindowButtons>
        <svg width="10" height="10"><path d="M0 5.500h10" stroke="#000" /></svg>
        <svg width="10" height="10"><path d="M.5.500h9v9h-9z" fill="none" stroke="#000" /></svg>
        <svg width="10" height="10"><path d="M0 0l10 10M10 0L0 10" stroke="#000" strokeWidth="1.100" /></svg>
      </WindowButtons>
    </TitleBar>
    <MenuBar>
      {menus.map(([a, u, b, w, fit]) => (
        <MenuItem key={u + b} $w={w} $fit={fit}>{a}<u>{u}</u>{b}</MenuItem>
      ))}
      <MenuClose>
        <svg width="9" height="8" viewBox="0 0 9 8"><path d="M1 .5l7 7M8 .5l-7 7" stroke="#56616d" strokeWidth="2" /></svg>
      </MenuClose>
    </MenuBar>
    <ToolRow>
      <Band $line>
        <Grip />
        <Tool $w={24}><Icon name="calc" /></Tool><Caret $w={12} />
        <Tool $w={24}><Icon name="open" /></Tool><Caret $w={13} />
        {tools('save', 'mail')}<Divider />
        <Tool $on><Icon name="edit" /></Tool><Divider />
        {tools('pdf', 'print', 'preview')}<Divider />
        <Tool><Icon name="spell" /></Tool><Tool $on><Icon name="autospell" /></Tool><Divider />
        {tools('cut', 'copy')}<Tool $w={24}><Icon name="paste" /></Tool><Caret $w={11} />
        {tools('brush')}<Divider />
        {tools('undo')}<Caret $w={11} $dim /><Tool $w={24}><Icon name="redo" /></Tool><Caret $w={12} $dim /><Divider />
        {tools('globe', 'sortAsc', 'sortDesc')}<Divider />
        {tools('chart', 'draw')}<Divider />
        {tools('find', 'compass', 'gallery', 'data', 'zoom')}<Divider />
        {tools('help')}
        <Overflow $gap={7} />
      </Band>
      <Band $line>
        <Grip />
        <Combo $w={100} $m="0 0 0 1px" $dim>Buscar<ComboButton><Chevron /></ComboButton></Combo>
        {tools('down', 'up')}
        <Overflow $gap={6} />
      </Band>
    </ToolRow>
    <ToolRow $last>
      <Band>
        <Grip />
        {tools('styles')}
        <Combo $w={167} $m="0 8px 0 9px">Arial<ComboButton><Chevron /></ComboButton></Combo>
        <Combo $w={67} $m="0 8px 0 0">10<ComboButton><Chevron /></ComboButton></Combo>
        {tools('bold', 'italic', 'underline')}<Divider $w={7} />
        {tools('left', 'center', 'right', 'justify', 'merge')}<Divider />
        {tools('currency', 'percent', 'standard', 'addDec', 'delDec')}<Divider />
        {tools('outdent', 'indent')}<Divider />
        <Tool $w={24}><Icon name="border" /></Tool><Caret $w={12} />
        <Tool $w={24}><Icon name="fill" /></Tool><Caret $w={12} />
        <Tool $w={24}><Icon name="fontColor" /></Tool><Caret $w={12} />
        <Overflow $gap={15} />
      </Band>
    </ToolRow>
    <Body>
      <Sheet>
        <FormulaBar>
          <Combo $w={126}>A1<ComboButton><Chevron /></ComboButton></Combo>
          <FormulaTools>{tools('fx', 'sum', 'equal')}</FormulaTools>
          <FormulaInput>Nombre empresa</FormulaInput>
        </FormulaBar>
        <GridArea>
          <Cells>
            <Line $head>
              <HeadCell />
              {letters.map((l) => <HeadCell key={l} $active={l === 'A'}>{l}</HeadCell>)}
            </Line>
            {sheetRows.map((row, r) => (
              <Line key={r}>
                <RowCell $active={r === 0}>{r + 1}</RowCell>
                {letters.map((l, c) => <DataCell key={l}>{row[c] ?? ''}</DataCell>)}
              </Line>
            ))}
            <Cursor />
          </Cells>
          <ScrollBar>
            <ScrollUp>
              <svg width="9" height="6" viewBox="0 0 9 6"><path d="M1 5l3.500-3.500L8 5" fill="none" stroke="#505050" strokeWidth="1.800" /></svg>
            </ScrollUp>
          </ScrollBar>
        </GridArea>
      </Sheet>
      <Splitter />
      <Deck>
        <svg width="17" height="16" viewBox="0 0 17 16">
          <path d="M0 1h16M0 5.500h16M0 10h16" stroke="#3a4656" strokeWidth="1.800" />
          <path d="M8 12.500h7L11.500 16z" fill="#000" />
        </svg>
        <DeckRule />
        <DeckButton $on><CubesIcon /></DeckButton>
        <DeckButton><StylesIcon /></DeckButton>
        <DeckButton><GalleryIcon /></DeckButton>
        <DeckButton><NavigatorIcon /></DeckButton>
      </Deck>
    </Body>
  </Window>
);

export default function App() {
  return (
    <Screen>
      <GlobalStyle />
      <ErpPage />
      <Backdrop />
      <UploadDialog />
      <CalcWindow />
    </Screen>
  );
}
